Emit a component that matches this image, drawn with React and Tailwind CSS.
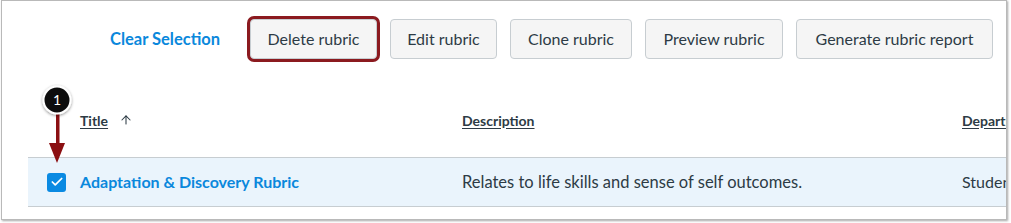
import React from 'react';
import { ArrowUp, Check } from 'lucide-react';

const ToolButton = ({ label, width, highlight }) => (
  <button
    className={`h-10 ${width} flex items-center justify-center rounded-[4px] border border-[#c7cdd1] bg-[#f5f5f5] text-[16px] text-[#2d3b45] whitespace-nowrap ${
      highlight ? 'ring-[3px] ring-[#8b1a1f]' : ''
    }`}
  >
    {label}
  </button>
);

const Callout = () => (
  <svg className="absolute left-[40px] top-[84px]" width="36" height="82" viewBox="0 0 36 82">
    <defs>
      <filter id="sh" x="-40%" y="-40%" width="180%" height="180%">
        <feDropShadow dx="0" dy="1" stdDeviation="1.5" floodColor="#000" floodOpacity="0.45" />
      </filter>
    </defs>
    <rect x="16" y="28" width="3.5" height="34" fill="#8b0f12" />
    <polygon points="9,59 25,59 17,79" fill="#8b0f12" />
    <circle cx="17" cy="16" r="13.5" fill="#111" stroke="#fff" strokeWidth="2" filter="url(#sh)" />
    <text x="17" y="21" textAnchor="middle" fill="#fff" fontSize="14" fontFamily="Lato, 'Open Sans', sans-serif">
      1
    </text>
  </svg>
);

export default function App() {
  const buttons = [
    { label: 'Edit rubric', width: 'w-[107px]' },
    { label: 'Clone rubric', width: 'w-[122px]' },
    { label: 'Preview rubric', width: 'w-[138px]' },
    { label: 'Generate rubric report', width: 'w-[197px]' },
  ];

  return (
    <div className="relative w-[1011px] h-[223px] bg-white font-['Lato','Open_Sans',sans-serif]">
      <div className="ml-[1px] w-[1006px] h-[220px] border border-[#b9b9b9] shadow-[1px_1px_2px_rgba(0,0,0,0.35)] overflow-hidden">
        {/* toolbar */}
        <div className="flex items-center pt-[18px] pl-[108px]">
          <span className="w-[109px] text-[16.5px] font-bold text-[#0a88dc] mr-[31px] whitespace-nowrap">Clear Selection</span>
          <div className="flex gap-[13px]">
            <ToolButton label="Delete rubric" width="w-[127px]" highlight />
            {buttons.map((b) => (
              <ToolButton key={b.label} label={b.label} width={b.width} />
            ))}
          </div>
        </div>

        {/* table */}
        <div className="ml-[26px] w-[1000px]">
          <div className="grid grid-cols-[52px_382px_500px_1fr] h-[98px] items-center pt-[24px] text-[14px] font-bold text-[#2d3b45]">
            <div />
            <div className="flex items-center gap-[11px]">
              <span className="underline underline-offset-2">Title</span>
              <ArrowUp className="w-[14px] h-[14px]" strokeWidth={1.8} />
            </div>
            <div>
              <span className="underline underline-offset-2">Description</span>
            </div>
            <div className="whitespace-nowrap">
              <span className="underline underline-offset-2">Department</span>
            </div>
          </div>

          <div className="grid grid-cols-[52px_382px_500px_1fr] h-[50px] items-center bg-[#eaf4fc] border-y border-[#c7cdd1] text-[16px]">
            <div className="pl-[19px]">
              <div className="w-[19px] h-[19px] rounded-[3px] bg-[#0a8ae2] flex items-center justify-center">
                <Check className="w-[14px] h-[14px] text-white" strokeWidth={3} />
              </div>
            </div>
            <div className="font-bold text-[#0a88dc] whitespace-nowrap">Adaptation &amp; Discovery Rubric</div>
            <div className="text-[#2d3b45] whitespace-nowrap text-[16.5px]">Relates to life skills and sense of self outcomes.</div>
            <div className="text-[#2d3b45] whitespace-nowrap">Student Services</div>
          </div>
        </div>
      </div>
      <Callout />
    </div>
  );
}
